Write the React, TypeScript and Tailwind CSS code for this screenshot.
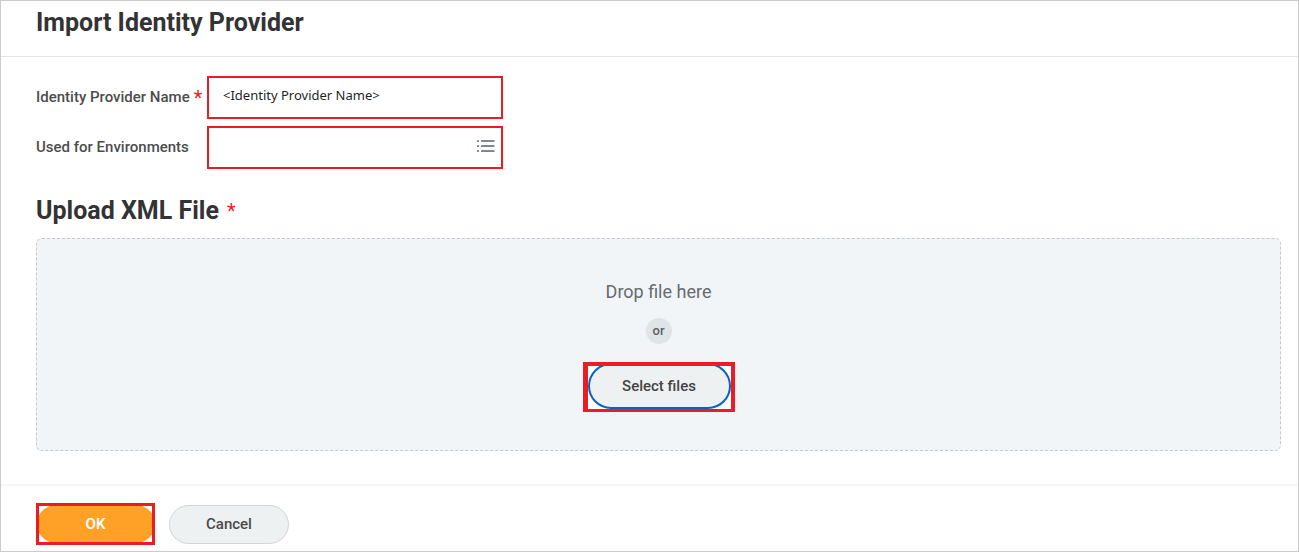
import { useRef, useState } from "react";

function ListIcon() {
  return (
    <svg width="18" height="14" viewBox="0 0 18 14" fill="#7c8894" aria-hidden="true">
      {[0, 5, 10].map((y) => (
        <g key={y}>
          <rect x="0" y={y + 1} width="2" height="2" rx="0.5" />
          <rect x="4" y={y + 1} width="13.5" height="2" rx="0.5" />
        </g>
      ))}
    </svg>
  );
}

export default function App() {
  const [name, setName] = useState("<Identity Provider Name>");
  const [environment, setEnvironment] = useState("");
  const fileInput = useRef<HTMLInputElement>(null);

  return (
    <form
      className="border border-[#cccccc] bg-white font-['Roboto',sans-serif] text-[#333333]"
      onSubmit={(e) => e.preventDefault()}
    >
      <header className="border-b border-[#e4e4e4] px-[35px] pt-1 pb-[15px]">
        <h1 className="text-[25px] leading-9 font-bold">Import Identity Provider</h1>
      </header>

      <main className="pt-[19px] pr-[17px] pb-[33px] pl-[35px]">
        <div className="grid grid-cols-[171px_296px] items-center gap-y-[7px] text-[15px] font-medium text-[#4d4d4d]">
          <label htmlFor="idp-name" className="flex items-center gap-1">
            Identity Provider Name
            <span className="text-xl leading-5 font-normal text-[#ee2222]">*</span>
          </label>
          <input
            id="idp-name"
            type="text"
            required
            value={name}
            onChange={(e) => setName(e.target.value)}
            className="h-[43px] w-full border-2 border-[#ed1c24] px-[14px] pb-[5px] font-['Noto_Sans',sans-serif] text-[13px] font-normal text-[#1f1f1f] outline-none"
          />

          <label htmlFor="idp-environments">Used for Environments</label>
          <div className="flex h-[43px] items-center border-2 border-[#ed1c24] pr-[6px]">
            <input
              id="idp-environments"
              type="text"
              value={environment}
              onChange={(e) => setEnvironment(e.target.value)}
              className="h-full min-w-0 flex-1 px-3 outline-none"
            />
            <button type="button" aria-label="Show environments" className="pb-1">
              <ListIcon />
            </button>
          </div>
        </div>

        <h2 className="mt-6 mb-[9px] flex items-center gap-2 text-[25px] leading-9 font-bold">
          Upload XML File
          <span className="text-xl font-normal text-[#ee2222]">*</span>
        </h2>

        <div className="flex flex-col items-center rounded-md border border-dashed border-[#c3cacf] bg-[#f1f5f8] pt-[39px] pb-[38px]">
          <p className="text-lg leading-7 text-[#666a6d]">Drop file here</p>
          <span className="mt-3 flex size-[26px] items-center justify-center rounded-full bg-[#dfe4e7] text-[13px] font-medium text-[#5c5f61]">
            or
          </span>
          <input ref={fileInput} type="file" accept=".xml" aria-label="XML file" className="hidden" />
          <div className="mt-[18px] flex h-[50px] w-[152px] items-end overflow-hidden border-4 border-b-[3px] border-l-[5px] border-[#ed1c24] bg-white">
            <button
              type="button"
              onClick={() => fileInput.current?.click()}
              className="h-[46px] w-full shrink-0 rounded-full border-2 border-[#0b62c0] bg-[#eef1f2] text-[15px] font-medium text-[#444444]"
            >
              Select files
            </button>
          </div>
        </div>
      </main>

      <footer className="flex items-center gap-[14px] border-t-2 border-[#f6f6f6] px-[35px] pt-[17px] pb-[6px]">
        <div className="flex h-[42px] w-[119px] items-center justify-center overflow-hidden border-[3px] border-[#ed1c24] bg-white">
          <button
            type="submit"
            className="h-[38px] w-[118px] shrink-0 rounded-full bg-[#ffa126] text-[15px] font-semibold text-white"
          >
            OK
          </button>
        </div>
        <button
          type="button"
          className="h-[39px] w-[120px] rounded-full border border-[#d0d5d9] bg-[#eef1f2] text-[15px] font-medium text-[#4a4a4a]"
        >
          Cancel
        </button>
      </footer>
    </form>
  );
}
